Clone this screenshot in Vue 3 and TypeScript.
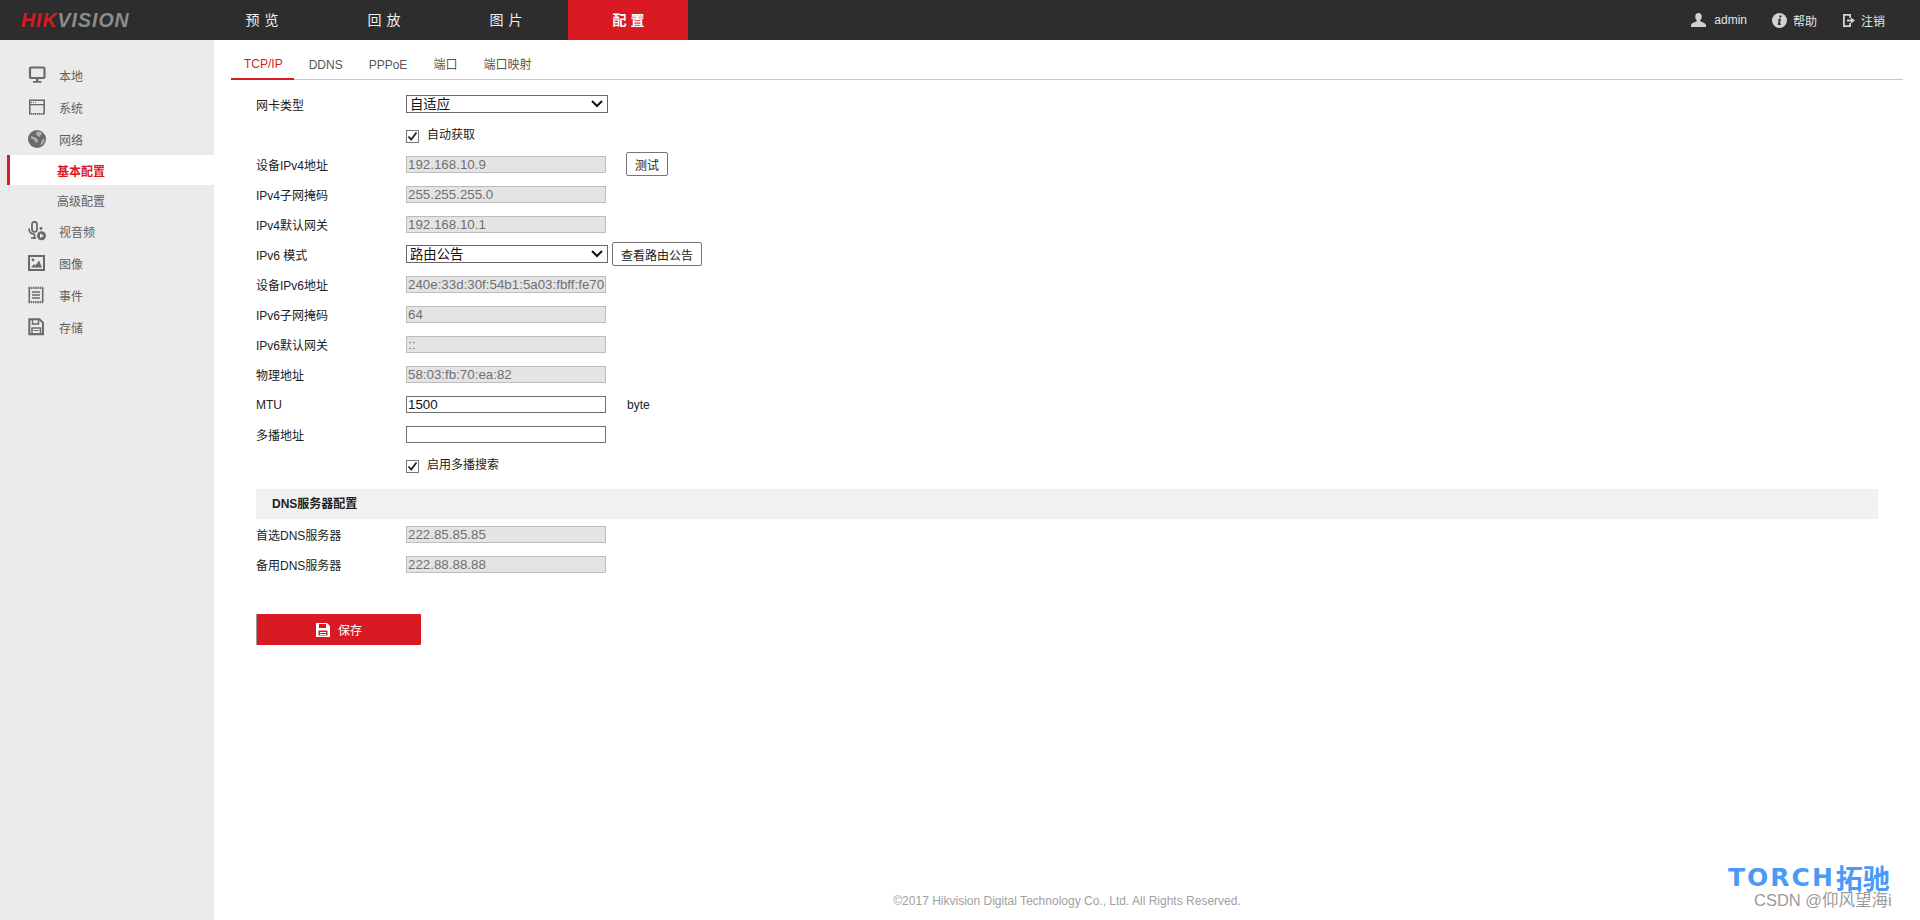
<script setup lang="ts">
interface MenuItem { label: string; icon?: string; active?: boolean }
const menu: MenuItem[] = [
  { label: '本地', icon: 'monitor' },
  { label: '系统', icon: 'system' },
  { label: '网络', icon: 'globe' },
  { label: '基本配置', active: true },
  { label: '高级配置' },
  { label: '视音频', icon: 'mic' },
  { label: '图像', icon: 'image' },
  { label: '事件', icon: 'event' },
  { label: '存储', icon: 'save' },
]
const nav = [
  { label: '预览' }, { label: '回放' }, { label: '图片' }, { label: '配置', active: true },
]
const tabs = ['TCP/IP', 'DDNS', 'PPPoE', '端口', '端口映射']
const ipv4 = [
  { label: 'IPv4子网掩码', value: '255.255.255.0' },
  { label: 'IPv4默认网关', value: '192.168.10.1' },
]
const ipv6 = [
  { label: '设备IPv6地址', value: '240e:33d:30f:54b1:5a03:fbff:fe70' },
  { label: 'IPv6子网掩码', value: '64' },
  { label: 'IPv6默认网关', value: '::' },
  { label: '物理地址', value: '58:03:fb:70:ea:82' },
]
const dns = [
  { label: '首选DNS服务器', value: '222.85.85.85' },
  { label: '备用DNS服务器', value: '222.88.88.88' },
]
</script>

<template>
  <div class="page">
    <header class="top">
      <div class="logo"><span class="hik">HIK</span><span class="vision">VISION</span></div>
      <nav class="nav">
        <div v-for="n in nav" :key="n.label" class="nav-item" :class="{ on: n.active }">{{ n.label }}</div>
      </nav>
      <div class="tools">
        <div class="tool user">
          <svg width="15" height="14" viewBox="0 0 15 14"><path fill="#cfcfcf" d="M7.5 0C9.6 0 10.8 1.500 10.800 3.600C10.800 5.300 10 6.600 9.300 7.300V8.300C10.800 9.200 15 9.800 15 12.400V14H0V12.400C0 9.800 4.200 9.200 5.700 8.300V7.300C5 6.600 4.200 5.300 4.200 3.600C4.200 1.500 5.400 0 7.500 0Z"/></svg>
          <span>admin</span>
        </div>
        <div class="tool help">
          <svg width="15" height="15" viewBox="0 0 15 15"><circle cx="7.500" cy="7.500" r="7.500" fill="#d2d2d2"/><path fill="#2d2d2d" d="M7.600 2.600h2l-.4 1.900h-2zM6.900 5.700h2.100l-1.100 4.800h1l-.3 1.400H5.700l1-4.800h-.9z"/></svg>
          <span>帮助</span>
        </div>
        <div class="tool out">
          <svg width="12" height="13" viewBox="0 0 12 13"><path fill="#d2d2d2" d="M0 0H8V4H6.300V1.800H1.800V11.200H6.300V9H8V13H0Z"/><path fill="#d2d2d2" d="M4 5.500H8V3.600L12 6.500L8 9.400V7.500H4Z"/></svg>
          <span>注销</span>
        </div>
      </div>
    </header>

    <div class="body">
      <aside class="side">
        <ul class="menu">
          <li v-for="m in menu" :key="m.label" class="mi" :class="{ sub: !m.icon, act: m.active }">
            <span v-if="m.icon" class="ico">
              <svg v-if="m.icon === 'monitor'" width="18" height="18" viewBox="0 0 18 18"><rect x="2" y="1.500" width="14.500" height="10.500" rx="1.200" fill="none" stroke="#6a6a6a" stroke-width="2.200"/><path fill="#6a6a6a" d="M8 13h2.500v2h3v1.800H5V15h3z"/></svg>
              <svg v-else-if="m.icon === 'system'" width="18" height="18" viewBox="0 0 18 18"><path fill="none" stroke="#6a6a6a" stroke-width="1.600" d="M1.800 15.500V2.300H16.200V15.500"/><path fill="#6a6a6a" d="M1 6h16v1.300H1z"/><path stroke="#6a6a6a" stroke-dasharray="1 1" stroke-width="1.200" d="M3 4.500h6"/><path stroke="#6a6a6a" stroke-dasharray="1.500 .5" stroke-width="1.800" d="M1 15.800H17"/></svg>
              <svg v-else-if="m.icon === 'globe'" width="18" height="18" viewBox="0 0 18 18"><circle cx="9" cy="9" r="9" fill="#6a6a6a"/><path fill="#ebebeb" d="M9 1.500C11 1.200 13 2 14.500 3.500L12.500 5L12 7L9.500 6L8 4ZM15.500 8L16.500 10C16 12.500 14.500 14.500 12.500 15.500L13 12L14 11ZM3 6L7 7.500L10 9.500L9.500 12L8 13L6.500 10L3 8.500Z" opacity=".55"/></svg>
              <svg v-else-if="m.icon === 'mic'" width="18" height="20" viewBox="0 0 18 20"><rect x="4" y="0.800" width="5" height="10" rx="2.500" fill="none" stroke="#6a6a6a" stroke-width="1.800"/><path fill="none" stroke="#6a6a6a" stroke-width="1.800" d="M1 7.500C1 11 3 13 6.500 13M6.500 13V17M3 17.200H8"/><circle cx="13.500" cy="14.800" r="4.500" fill="#6a6a6a"/><path fill="#ebebeb" d="M12 12.500L16 14.800L12 17.100Z"/><circle cx="13" cy="7.500" r="1.400" fill="#6a6a6a"/></svg>
              <svg v-else-if="m.icon === 'image'" width="18" height="16" viewBox="0 0 18 16"><rect x="1" y="1" width="15" height="14" fill="none" stroke="#6a6a6a" stroke-width="2"/><circle cx="5" cy="5" r="1.400" fill="#6a6a6a"/><path fill="#6a6a6a" d="M3 12.500L6 9L7.500 10.500L11 5.500L14 12.500Z"/></svg>
              <svg v-else-if="m.icon === 'event'" width="18" height="18" viewBox="0 0 18 18"><path fill="none" stroke="#6a6a6a" stroke-width="1.600" d="M1.300 2V16M14.700 2V16"/><path stroke="#6a6a6a" stroke-dasharray="1.500 .7" stroke-width="2.200" d="M.5 1.800H15.500M.5 16.200H15.500"/><path stroke="#6a6a6a" stroke-width="1.300" d="M4 6h8M4 9h8M4 12h8"/></svg>
              <svg v-else width="18" height="18" viewBox="0 0 18 18"><path fill="none" stroke="#6a6a6a" stroke-width="2" d="M1.300 1.300H11.500L15 4.800V16.300H1.300Z"/><path fill="none" stroke="#6a6a6a" stroke-width="1.500" d="M4.500 2V6H10.500V2M4 10H12.500V16H4Z"/><path stroke="#6a6a6a" d="M5.500 12.500H11"/></svg>
            </span>
            <span class="ml">{{ m.label }}</span>
          </li>
        </ul>
      </aside>

      <main class="main">
        <div class="tabs">
          <div v-for="(t, i) in tabs" :key="t" class="tab" :class="{ on: i === 0 }">{{ t }}</div>
        </div>

        <form class="form" @submit.prevent>
          <div class="row">
            <label class="lb">网卡类型</label>
            <select class="sel"><option>自适应</option></select>
          </div>
          <div class="row chk-row">
            <span class="lb"></span>
            <span class="chk"><svg width="11" height="11" viewBox="0 0 11 11"><path fill="none" stroke="#222" stroke-width="1.800" d="M1.500 5.500L4.200 8.500L9.500 1.500"/></svg></span>
            <span class="chk-t">自动获取</span>
          </div>
          <div class="row">
            <label class="lb">设备IPv4地址</label>
            <input class="ip dis" disabled value="192.168.10.9" />
            <button type="button" class="btn test">测试</button>
          </div>
          <div v-for="r in ipv4" :key="r.label" class="row">
            <label class="lb">{{ r.label }}</label>
            <input class="ip dis" disabled :value="r.value" />
          </div>
          <div class="row">
            <label class="lb">IPv6 模式</label>
            <select class="sel"><option>路由公告</option></select>
            <button type="button" class="btn view">查看路由公告</button>
          </div>
          <div v-for="r in ipv6" :key="r.label" class="row">
            <label class="lb">{{ r.label }}</label>
            <input class="ip dis" disabled :value="r.value" />
          </div>
          <div class="row">
            <label class="lb">MTU</label>
            <input class="ip" value="1500" />
            <span class="unit">byte</span>
          </div>
          <div class="row">
            <label class="lb">多播地址</label>
            <input class="ip" value="" />
          </div>
          <div class="row chk-row">
            <span class="lb"></span>
            <span class="chk"><svg width="11" height="11" viewBox="0 0 11 11"><path fill="none" stroke="#222" stroke-width="1.800" d="M1.500 5.500L4.200 8.500L9.500 1.500"/></svg></span>
            <span class="chk-t">启用多播搜索</span>
          </div>

          <div class="sec">DNS服务器配置</div>
          <div v-for="r in dns" :key="r.label" class="row">
            <label class="lb">{{ r.label }}</label>
            <input class="ip dis" disabled :value="r.value" />
          </div>

          <button type="button" class="save">
            <svg width="14" height="14" viewBox="0 0 14 14"><path fill="#fff" fill-rule="evenodd" d="M0 0H11L14 3V14H0ZM3 1V5H10V1ZM2.500 7.500V12.500H11.500V7.500Z"/><path fill="#fff" d="M4 9H10V10H4ZM4 11H10V12H4Z"/></svg>
            <span>保存</span>
          </button>
        </form>

        <footer class="foot">©2017 Hikvision Digital Technology Co., Ltd. All Rights Reserved.</footer>
      </main>
    </div>

    <div class="mark">
      <div class="mark-a"><span class="torch">TORCH</span><span class="tuo">拓驰</span></div>
      <div class="mark-b">CSDN @仰风望海i</div>
    </div>
  </div>
</template>

<style scoped>
.page {
  position: relative;
  display: flex;
  flex-direction: column;
  height: 920px;
  overflow: hidden;
  font-family: "Liberation Sans", "Noto Sans CJK SC", sans-serif;
  font-size: 12px;
  color: #222;
  background: #fff;
}
.top {
  flex: 0 0 40px;
  display: flex;
  align-items: center;
  background: #2d2d2d;
}
.logo {
  flex: 0 0 202px;
  padding-left: 21px;
  box-sizing: border-box;
  font-size: 19.500px;
  font-weight: 700;
  font-style: italic;
  letter-spacing: 1px;
  line-height: 40px;
}
.hik { color: #d91a22; }
.vision { color: #8c8c8c; }
.nav { display: flex; gap: 2px; height: 40px; }
.nav-item {
  width: 120px;
  padding-left: 5px;
  box-sizing: border-box;
  text-align: center;
  line-height: 40px;
  font-size: 14px;
  letter-spacing: 5px;
  color: #f0f0f0;
}
.nav-item.on { background: #d91a22; color: #fff; font-weight: 700; letter-spacing: 4px; }
.tools { margin-left: auto; display: flex; align-items: center; padding-right: 35px; color: #e4e4e4; }
.tool { display: flex; align-items: center; }
.user { gap: 8px; margin-right: 25px; }
.help { gap: 6px; margin-right: 26px; }
.out { gap: 6px; }

.body { flex: 1; display: flex; min-height: 0; }
.side { flex: 0 0 214px; background: #ebebeb; }
.menu { list-style: none; margin: 19px 0 0; padding: 0 0 0 7px; }
.mi {
  height: 32px;
  display: flex;
  align-items: center;
  gap: 13px;
  padding-left: 18px;
  border-left: 3px solid transparent;
  color: #5f5f5f;
}
.ico { width: 18px; height: 20px; display: flex; align-items: center; }
.mi.sub { height: 30px; padding-left: 47px; }
.mi.act { background: #fff; border-left-color: #d91a22; color: #d91a22; font-weight: 700; }

.main { flex: 1; display: flex; flex-direction: column; min-width: 0; }
.tabs {
  height: 40px;
  margin: 0 17px 0 17px;
  display: flex;
  align-items: flex-end;
  gap: 2px;
  border-bottom: 1px solid #c8c8c8;
  box-sizing: border-box;
}
.tab {
  height: 30px;
  line-height: 32px;
  padding: 0 11px 0 13px;
  color: #555;
  box-sizing: border-box;
}
.tab.on {
  color: #d91a22;
  line-height: 28px;
  border-bottom: 2px solid #d91a22;
  margin-bottom: -1px;
}
.form { padding: 9px 42px 0 42px; }
.row { height: 30px; display: flex; align-items: center; }
.lb { flex: 0 0 150px; padding-top: 1px; }
.sel {
  appearance: none;
  width: 202px;
  height: 18px;
  font-family: "Liberation Sans", "Noto Sans CJK SC", sans-serif;
  font-size: 13.330px;
  background: #fff url("data:image/svg+xml,%3Csvg xmlns='http://www.w3.org/2000/svg' width='12' height='8'%3E%3Cpath fill='none' stroke='%23111' stroke-width='2' d='M1 1l5 5 5-5'/%3E%3C/svg%3E") no-repeat right 4px center;
  color: #111;
  border: 1px solid #666;
  padding: 0 0 0 3px;
  box-sizing: border-box;
  border-radius: 0;
}
.ip {
  width: 200px;
  height: 17px;
  box-sizing: border-box;
  padding: 1px;
  border: 1px solid #707070;
  font-family: "Liberation Sans", sans-serif;
  font-size: 13.330px;
  color: #111;
  background: #fff;
  outline: none;
  margin: 0;
}
.ip.dis { background: #e4e4e4; border-color: #bcbcbc; color: #707070; }
.chk-row { padding-top: 4px; box-sizing: border-box; }
.chk {
  width: 11px;
  height: 11px;
  border: 1px solid #767676;
  background: #fff;
  display: flex;
  margin-right: 8px;
}
.chk-t { color: #222; margin-bottom: 5px; }
.btn {
  height: 24px;
  background: #fff;
  border: 1px solid #767676;
  border-radius: 2px;
  font-family: "Liberation Sans", "Noto Sans CJK SC", sans-serif;
  font-size: 12px;
  color: #222;
  padding: 0;
}
.test { width: 42px; margin-left: 20px; }
.view { width: 90px; margin-left: 4px; }
.unit { margin-left: 21px; padding-top: 2px; }
.sec {
  height: 30px;
  line-height: 30px;
  margin-top: 10px;
  padding-left: 16px;
  background: #f1f1f1;
  font-weight: 700;
  color: #222;
}
.save {
  margin-top: 35px;
  width: 165px;
  height: 31px;
  display: flex;
  align-items: center;
  justify-content: center;
  gap: 8px;
  background: #d91a22;
  border: 0;
  border-left: 1px solid #999;
  border-radius: 1px;
  color: #fff;
  font-family: "Liberation Sans", "Noto Sans CJK SC", sans-serif;
  font-size: 12px;
  padding: 0;
}
.foot {
  margin-top: auto;
  height: 38px;
  line-height: 38px;
  text-align: center;
  color: #a0a0a0;
}
.mark {
  position: absolute;
  right: 16px;
  top: 866px;
  width: 176px;
}
.mark-a {
  display: flex;
  align-items: center;
  height: 24px;
  color: #4a9bf5;
  font-weight: 700;
}
.torch { font-size: 25px; line-height: 24px; letter-spacing: 2px; font-family: "DejaVu Sans", sans-serif; margin-right: 1px; }
.tuo { font-size: 27px; font-family: "Noto Sans CJK SC", sans-serif; line-height: 24px; }
.mark-b {
  margin-left: 26px;
  margin-top: 1px;
  white-space: nowrap;
  font-size: 16.500px;
  line-height: 18px;
  color: #9a9a9a;
}
</style>

<style>
html, body { margin: 0; background: #fff; }
</style>
